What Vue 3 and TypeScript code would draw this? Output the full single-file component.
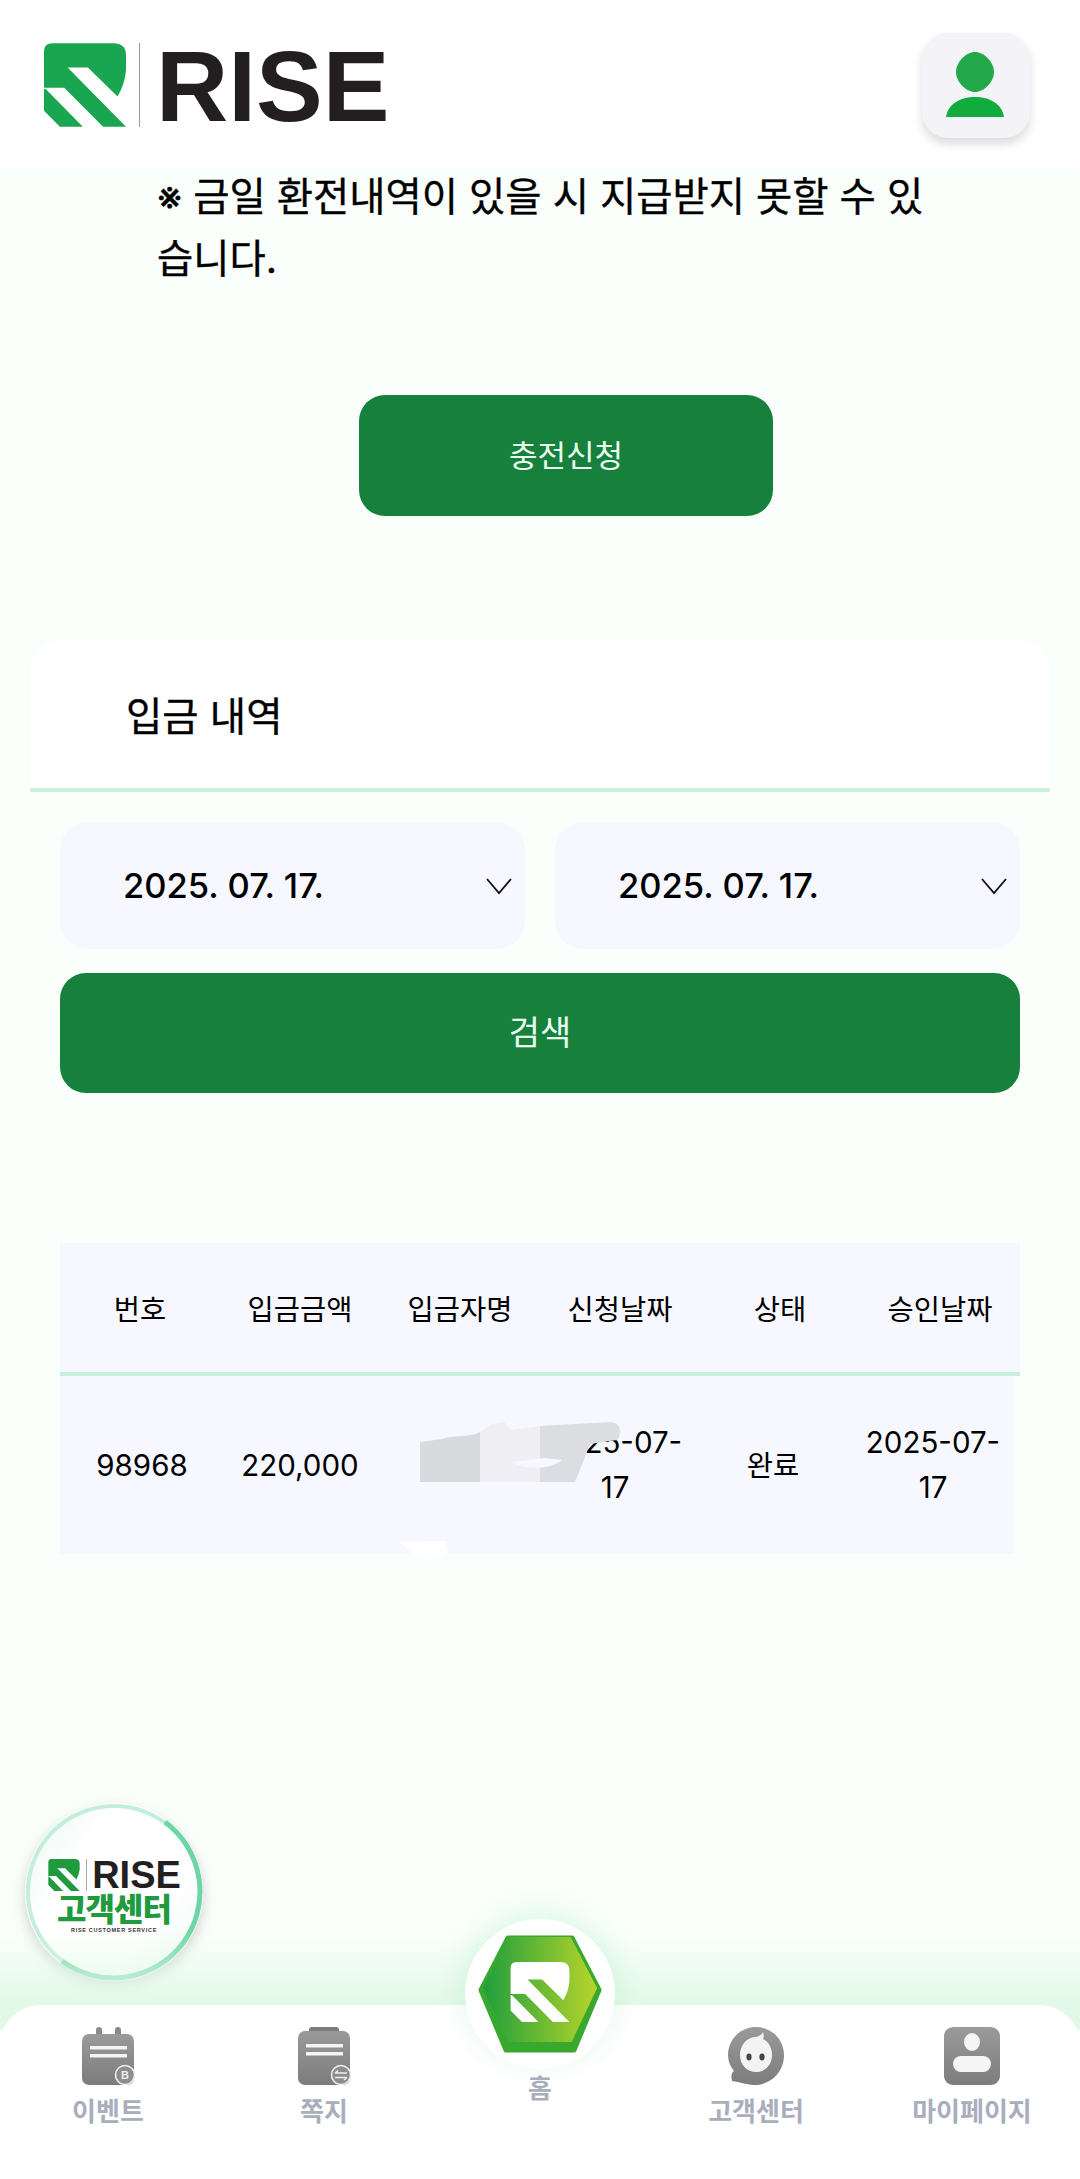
<template>
  <div class="page">
    <header class="top-bar">
      <div class="brand">
        <svg class="brand-mark" viewBox="75 70 243 248">
          <path :d="markMain" fill="#1aa650" />
          <path :d="markLow" fill="#1aa650" />
        </svg>
        <span class="brand-line"></span>
        <span class="brand-name">RISE</span>
      </div>
      <button class="profile-btn" type="button" aria-label="profile">
        <svg width="58" height="66" viewBox="0 0 58 66">
          <path d="M29 0 C38 0 48 10 48 20 C48 30 38 40 29 40 C20 40 10 30 10 20 C10 10 20 0 29 0 Z" fill="#23a84a" />
          <path d="M0 65 C2 52 14 45 29 45 C44 45 56 52 58 65 Z" fill="#12ab3d" />
        </svg>
      </button>
    </header>

    <main class="content">
      <p class="notice">※ 금일 환전내역이 있을 시 지급받지 못할 수 있습니다.</p>
      <button class="charge-btn" type="button">충전신청</button>

      <section class="history">
        <h2 class="history-title">입금 내역</h2>
        <div class="filters">
          <div class="date-row">
            <div v-for="d in dates" :key="d.id" class="date-box">
              <span>{{ d.value }}</span>
              <svg class="chevron" width="28" height="20" viewBox="0 0 28 20">
                <path d="M2 3 L14 17 L26 3" fill="none" stroke="#111" stroke-width="1.8" />
              </svg>
            </div>
          </div>
          <button class="search-btn" type="button">검색</button>
        </div>

        <div class="table">
          <div class="thead">
            <span v-for="h in heads" :key="h">{{ h }}</span>
          </div>
          <div class="tbody">
            <span v-for="(c, i) in row" :key="i" class="cell" :class="{ ko: c === '완료' }">{{ c }}</span>
            <svg class="scribble" width="202" height="60" viewBox="0 0 202 60">
              <path d="M0 20 L22 17 C36 12 50 16 60 10 L60 60 L0 60 Z" fill="#d9dade" />
              <path d="M60 10 L72 2 L84 0 L92 8 L120 4 L120 60 L60 60 Z" fill="#eeeef3" />
              <path d="M120 4 L190 0 C200 0 203 10 197 18 L170 22 L163 40 L155 60 L120 60 Z" fill="#dcdde1" />
              <path d="M90 40 C106 48 130 48 142 38 L126 36 Z" fill="#f7f8ff" />
            </svg>
            <svg class="scribble-low" width="48" height="18" viewBox="0 0 48 18">
              <path d="M0 1 L46 0 L48 12 L28 18 L14 14 Z" fill="#fff" />
            </svg>
          </div>
        </div>
      </section>
    </main>

    <a class="cs-float">
      <svg class="cs-ring" width="178" height="178" viewBox="0 0 178 178">
        <circle cx="89" cy="89" r="86" fill="none" stroke="#c3eedb" stroke-width="4" />
        <path d="M140 19 A86 86 0 0 1 37 158" fill="none" stroke="#6ed6a6" stroke-width="5" />
      </svg>
      <div class="cs-logo">
        <svg width="34" height="32" viewBox="75 70 243 248">
          <path :d="markMain" fill="#1f9a3f" />
          <path :d="markLow" fill="#1f9a3f" />
        </svg>
        <i></i>
        <span>RISE</span>
      </div>
      <strong class="cs-title">고객센터</strong>
      <small class="cs-sub">RISE CUSTOMER SERVICE</small>
    </a>

    <div class="nav-glow"></div>
    <nav class="bottom-nav">
      <a class="nav-item">
        <svg class="nav-icon" width="54" height="58" viewBox="0 0 54 58">
          <rect x="15" y="0" width="6" height="16" rx="3" fill="#8a8a8a" />
          <rect x="34" y="0" width="6" height="16" rx="3" fill="#8a8a8a" />
          <rect x="1" y="7" width="52" height="51" rx="7" fill="url(#navGray)" />
          <rect x="9" y="19" width="37" height="3.5" fill="#f4f4f4" />
          <rect x="9" y="27" width="37" height="3.5" fill="#f4f4f4" />
          <circle cx="44" cy="48" r="9.5" fill="#8d8d8d" stroke="#eee" stroke-width="1.6" />
          <text x="44" y="52" class="badge-text">B</text>
        </svg>
        <span>이벤트</span>
      </a>
      <a class="nav-item">
        <svg class="nav-icon" width="54" height="58" viewBox="0 0 54 58">
          <rect x="12" y="0" width="30" height="8" rx="3" fill="#7d7d7d" />
          <rect x="1" y="4" width="52" height="54" rx="7" fill="url(#navGray)" />
          <rect x="9" y="17" width="37" height="3.5" fill="#f4f4f4" />
          <rect x="9" y="25" width="37" height="3.5" fill="#f4f4f4" />
          <circle cx="44" cy="48" r="9.5" fill="#8d8d8d" stroke="#eee" stroke-width="1.6" />
          <path d="M38 46 H50 M38 46 L41 43.5 M50 50.5 H38 M50 50.5 L47 53" stroke="#eee" stroke-width="1.4" fill="none" />
        </svg>
        <span>쪽지</span>
      </a>
      <a class="nav-item home">
        <div class="home-disc">
          <svg width="124" height="118" viewBox="0 0 124 118">
            <defs>
              <linearGradient id="hexFill" x1="0" x2="1" y1="0" y2="0">
                <stop offset="0" stop-color="#1f9f3c" />
                <stop offset="1" stop-color="#b6d42b" />
              </linearGradient>
              <linearGradient id="navGray" x1="0" x2="0" y1="0" y2="1">
                <stop offset="0" stop-color="#9a9a9a" />
                <stop offset="1" stop-color="#7c7c7c" />
              </linearGradient>
            </defs>
            <path d="M30 3 H94 L121 55 L96 115 H28 L3 55 Z" fill="#38a82e" stroke="#38a82e" stroke-width="5" stroke-linejoin="round" />
            <path d="M32 3 H92 L118 53 L93 106 H31 L6 53 Z" fill="url(#hexFill)" stroke="url(#hexFill)" stroke-width="2" stroke-linejoin="round" />
            <svg x="32" y="27" width="60" height="60" viewBox="75 70 243 248">
              <path :d="markMain" fill="#fff" />
              <path :d="markLow" fill="#fff" />
            </svg>
          </svg>
        </div>
        <span>홈</span>
      </a>
      <a class="nav-item">
        <svg class="nav-icon" width="56" height="58" viewBox="0 0 56 58">
          <path d="M28 0 C44 0 56 13 56 28 C56 45 43 58 26 58 C20 58 12 55 4 54 C3 50 3 46 6 44 C2 39 0 34 0 28 C0 13 12 0 28 0 Z" fill="url(#navGray)" />
          <path d="M28 10 C31 9 34 8 35 5 C36 8 36 10 35 12 C41 15 44 21 44 28 C44 38 37 45 28 45 C19 45 12 38 12 28 C12 18 19 10 28 10 Z" fill="#f3f3f3" />
          <ellipse cx="21" cy="30" rx="2.6" ry="3.4" fill="#444" />
          <ellipse cx="34" cy="30" rx="2.6" ry="3.4" fill="#444" />
        </svg>
        <span>고객센터</span>
      </a>
      <a class="nav-item">
        <svg class="nav-icon" width="56" height="58" viewBox="0 0 56 58">
          <rect x="0" y="0" width="56" height="58" rx="9" fill="url(#navGray)" />
          <ellipse cx="28" cy="15" rx="8" ry="9" fill="#f5f5f5" />
          <rect x="9" y="29" width="38" height="16" rx="8" fill="#f5f5f5" />
        </svg>
        <span>마이페이지</span>
      </a>
    </nav>
  </div>
</template>

<script setup lang="ts">
const markMain =
  'M75 95 Q75 70 100 70 L280 70 Q318 70 318 105 L318 150 Q315 190 293 228 L205 142 L145 142 L318 318 L250 318 L135 202 L75 202 Z'
const markLow = 'M75 206 L80 206 L190 318 L122 318 L75 270 Z'

const dates = [
  { id: 'from', value: '2025. 07. 17.' },
  { id: 'to', value: '2025. 07. 17.' }
]
const heads = ['번호', '입금금액', '입금자명', '신청날짜', '상태', '승인날짜']
const row = ['98968', '220,000', '', '2025-07-17', '완료', '2025-07-17']
</script>

<style>
body {
  background: #fbfffc;
}
</style>

<style scoped>
.page {
  position: relative;
  height: 2179px;
  overflow: hidden;
  background: #fbfffc;
  font-family: Inter, 'Noto Sans CJK KR', sans-serif;
  color: #000;
}

.top-bar {
  height: 170px;
  box-sizing: border-box;
  padding: 0 50px 0 44px;
  background: #fff;
  display: flex;
  align-items: center;
  justify-content: space-between;
}

.brand {
  display: flex;
  align-items: center;
}

.brand-mark {
  width: 82px;
  height: 84px;
}

.brand-line {
  width: 1px;
  height: 84px;
  margin: 0 16px 0 13px;
  background: #999;
}

.brand-name {
  font-family: 'Liberation Sans', sans-serif;
  font-weight: 700;
  font-size: 100px;
  line-height: 84px;
  padding-top: 2px;
  color: #231f20;
}

.profile-btn {
  width: 108px;
  height: 105px;
  border: 0;
  border-radius: 26px;
  background: #f3f3f8;
  box-shadow: 0 6px 10px rgba(0, 0, 0, 0.14);
  padding: 0 2px 0 0;
  display: flex;
  align-items: center;
  justify-content: center;
}

.notice {
  margin: -4px 0 0;
  padding: 0 146px 0 157px;
  font-size: 39.4px;
  -webkit-text-stroke: 0.35px #000;
  line-height: 62px;
  word-break: break-all;
}

.charge-btn {
  display: block;
  width: 414px;
  height: 121px;
  margin: 105px 0 0 359px;
  padding: 0 0 5px;
  border: 0;
  border-radius: 26px;
  background: #17803d;
  color: #e9fff0;
  font: inherit;
  font-size: 31px;
}

.history {
  margin: 126px 30px 0;
}

.history-title {
  margin: 0;
  height: 146px;
  box-sizing: content-box;
  padding-left: 96px;
  background: #fff;
  border-radius: 28px 28px 0 0;
  border-bottom: 4px solid #c9f0dc;
  font-size: 39.5px;
  font-weight: 400;
  -webkit-text-stroke: 0.35px #000;
  line-height: 150px;
}

.filters {
  padding: 30px 30px 0;
}

.date-row {
  display: grid;
  grid-template-columns: 1fr 1fr;
  gap: 30px;
}

.date-box {
  position: relative;
  height: 127px;
  border-radius: 28px;
  background: #f7f8ff;
  padding-left: 63px;
  display: flex;
  align-items: center;
  font-size: 34.5px;
  font-weight: 500;
}

.chevron {
  position: absolute;
  right: 12px;
  top: 54px;
}

.search-btn {
  display: block;
  width: 100%;
  height: 120px;
  margin-top: 24px;
  padding: 0 0 5px;
  border: 0;
  border-radius: 26px;
  background: #17803d;
  color: #e9fff0;
  font: inherit;
  font-size: 34px;
}

.table {
  margin: 150px 30px 0;
  font-size: 30px;
}

.thead {
  display: grid;
  grid-template-columns: repeat(6, 1fr);
  height: 129px;
  align-items: center;
  text-align: center;
  background: #f7f8ff;
  border-bottom: 4px solid #c6f0db;
  font-size: 28.5px;
}

.tbody {
  position: relative;
  display: grid;
  grid-template-columns: 164px 152px 160px 158px 158px 162px;
  width: 954px;
  height: 178px;
  align-items: center;
  text-align: center;
  background: #f7f8ff;
  line-height: 45px;
  font-size: 29.5px;
}

.cell {
  padding: 0 6px;
}

.cell.ko {
  font-size: 28.5px;
}

.scribble {
  position: absolute;
  left: 360px;
  top: 46px;
}

.scribble-low {
  position: absolute;
  left: 340px;
  bottom: 0;
  transform: translateY(5px);
}

.cs-float {
  position: absolute;
  left: 25px;
  top: 1803px;
  width: 178px;
  height: 178px;
  border-radius: 50%;
  background: linear-gradient(125deg, #e6f8ef 0%, #fff 30%, #fff 70%, #e9f9f1 100%);
  box-shadow: 0 6px 14px rgba(0, 0, 0, 0.18);
  display: flex;
  flex-direction: column;
  align-items: center;
  padding-top: 56px;
  box-sizing: border-box;
}

.cs-ring {
  position: absolute;
  left: 0;
  top: 0;
}

.cs-logo {
  display: flex;
  align-items: center;
  height: 32px;
}

.cs-logo i {
  width: 1px;
  height: 32px;
  margin: 0 5px;
  background: #aaa;
}

.cs-logo span {
  font-family: 'Liberation Sans', sans-serif;
  font-weight: 700;
  font-size: 38px;
  line-height: 32px;
  color: #231f20;
}

.cs-title {
  margin-top: 3px;
  font-size: 32px;
  line-height: 32px;
  font-weight: 900;
  color: #1f9a3f;
  letter-spacing: -1px;
}

.cs-sub {
  font-family: 'Liberation Sans', sans-serif;
  font-weight: 700;
  font-size: 5.5px;
  line-height: 9px;
  letter-spacing: 0.7px;
  color: #333;
}

.nav-glow {
  position: absolute;
  left: 0;
  right: 0;
  top: 1930px;
  height: 100px;
  background: linear-gradient(to bottom, rgba(225, 248, 231, 0), #e2f9e7 75%);
}

.bottom-nav {
  position: absolute;
  left: 0;
  right: 0;
  bottom: 0;
  height: 174px;
  background: #fff;
  border-radius: 40px 40px 0 0;
  display: grid;
  grid-template-columns: repeat(5, 1fr);
  font-weight: 700;
  font-size: 26px;
  color: #a9aebd;
}

.nav-item {
  display: flex;
  flex-direction: column;
  align-items: center;
  padding-top: 22px;
}

.nav-icon {
  display: block;
  margin-bottom: 9px;
}

.nav-item span {
  line-height: 36px;
}

.badge-text {
  font-family: 'Liberation Sans', sans-serif;
  font-size: 11px;
  font-weight: 700;
  text-anchor: middle;
  fill: #eee;
}

.home {
  position: relative;
  padding-top: 66px;
}

.home-disc {
  position: absolute;
  left: 33px;
  top: -86px;
  width: 150px;
  height: 150px;
  border-radius: 50%;
  background: #fff;
  box-shadow: 0 -8px 30px rgba(50, 205, 110, 0.16);
  display: flex;
  align-items: center;
  justify-content: center;
}
</style>
